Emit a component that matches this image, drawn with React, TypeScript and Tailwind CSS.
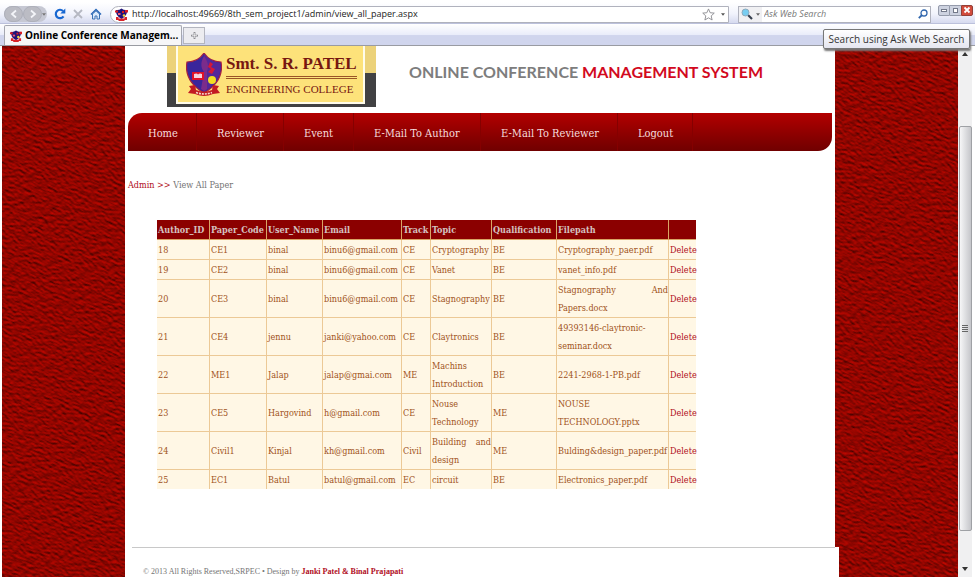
import React from "react";

const NAV = [
  { label: "Home", width: "w-[69px]" },
  { label: "Reviewer", width: "w-[87px]" },
  { label: "Event", width: "w-[70px]" },
  { label: "E-Mail To Author", width: "w-[127px]" },
  { label: "E-Mail To Reviewer", width: "w-[137px]" },
  { label: "Logout", width: "w-[75px]" },
];

const COLUMNS = [
  { name: "Author_ID", width: "w-[53px]" },
  { name: "Paper_Code", width: "w-[57px]" },
  { name: "User_Name", width: "w-[56px]" },
  { name: "Email", width: "w-[79px]" },
  { name: "Track", width: "w-[29px]" },
  { name: "Topic", width: "w-[61px]" },
  { name: "Qualification", width: "w-[65px]" },
  { name: "Filepath", width: "w-[112px]" },
];

const PAPERS = [
  ["18", "CE1", "binal", "binu6@gmail.com", "CE", "Cryptography", "BE", "Cryptography_paer.pdf"],
  ["19", "CE2", "binal", "binu6@gmail.com", "CE", "Vanet", "BE", "vanet_info.pdf"],
  ["20", "CE3", "binal", "binu6@gmail.com", "CE", "Stagnography", "BE", "Stagnography And Papers.docx"],
  ["21", "CE4", "jennu", "janki@yahoo.com", "CE", "Claytronics", "BE", "49393146-claytronic-seminar.docx"],
  ["22", "ME1", "Jalap", "jalap@gmai.com", "ME", "Machins Introduction", "BE", "2241-2968-1-PB.pdf"],
  ["23", "CE5", "Hargovind", "h@gmail.com", "CE", "Nouse Technology", "ME", "NOUSE TECHNOLOGY.pptx"],
  ["24", "Civil1", "Kinjal", "kh@gmail.com", "Civil", "Building and design", "ME", "Bulding&design_paper.pdf"],
  ["25", "EC1", "Batul", "batul@gmail.com", "EC", "circuit", "BE", "Electronics_paper.pdf"],
];

function Crest({ className }: { className: string }) {
  return (
    <svg viewBox="0 0 36 44" className={className} aria-hidden="true">
      <path d="M18 0 C14 6 8 9 1 9 C-1 20 3 31 18 40 C33 31 37 20 35 9 C28 9 22 6 18 0Z" fill="#3a259b" stroke="#a8203f" strokeWidth="1.2" />
      <path d="M18 1 C22 6 28 9 34 10 C36 20 32 30 18 39Z" fill="#542799" />
      <path d="M18 3 C14 10 15 15 18 19 L15 36 L18 38 L21 36 L21 18 C23 13 22 9 18 3Z" fill="#7b2c8b" />
      <path d="m24 9 3 2-2 3 4 2-3 5-4-2 3-3-3-2Z" fill="#d51836" />
      <path d="M6 19h12v8H6Z" fill="#e01228" />
      <path d="M8 21q3-1 4 .5 1.500-1.500 4-.5v4H8Z" fill="#f5d4df" />
      <circle cx="26" cy="27" r="4" fill="#f3df22" />
      <path d="M3 33 9 32l1 5q8 3 16 0l1-5 6 1-2 3 3 4-7 1q-9 4-18 0l-7-1 3-4Z" fill="#c21c22" />
      <path d="M10 39.500q8 3 16 0" stroke="#f5d7cf" strokeWidth="1.600" strokeDasharray="2 1" fill="none" />
    </svg>
  );
}

function Favicon({ className }: { className: string }) {
  return (
    <svg viewBox="0 0 13 13" className={className} aria-hidden="true">
      <path d="M1 2Q4 2.500 6.500 .5 9 2.500 12 2 12.500 8 6.500 11 .5 8 1 2Z" fill="#20147a" />
      <path d="M0 2.500h3v2H0ZM10 2h3v2.500h-3ZM7 3h2v2H7Z" fill="#d91d24" />
      <path d="M3 5h2.500v2H3Z" fill="#ed5a72" />
      <circle cx="9" cy="7.500" r="1.300" fill="#f0d43a" />
      <path d="M1 9h2.500v1.500h6V9H12v3H9.500v1h-6v-1H1Z" fill="#d8242a" />
    </svg>
  );
}

function LeatherTexture() {
  return (
    <svg className="absolute inset-0 h-full w-full" aria-hidden="true">
      <defs>
        <filter id="leather" x="0" y="0" width="100%" height="100%" colorInterpolationFilters="sRGB">
          <feTurbulence type="fractalNoise" baseFrequency="0.2 0.42" numOctaves="3" seed="4" result="grain" />
          <feDiffuseLighting in="grain" surfaceScale="1.1" diffuseConstant="1" lightingColor="#ce0800">
            <feDistantLight azimuth="250" elevation="45" />
          </feDiffuseLighting>
        </filter>
      </defs>
      <rect width="100%" height="100%" fill="#8b0000" />
      <g transform="rotate(26)">
        <rect x="-100" y="-700" width="1500" height="1500" filter="url(#leather)" />
      </g>
    </svg>
  );
}

function ToolbarIcons() {
  return (
    <div className="flex items-center">
      <div className="flex h-4 w-[43px] items-center rounded-lg bg-[#c6c8d3]">
        <button aria-label="Back" className="flex h-4 w-[19px] items-center justify-center rounded-lg border border-[#aeb0ba] bg-[#bbbcc4]">
          <svg viewBox="0 0 10 10" className="h-2.5 w-2.5"><path d="M7 1.500 3 5l4 3.500" stroke="#f4f5f9" strokeWidth="1.800" fill="none" /></svg>
        </button>
        <button aria-label="Forward" className="flex h-4 w-[19px] items-center justify-center rounded-lg border border-[#aeb0ba] bg-[#bbbcc4]">
          <svg viewBox="0 0 10 10" className="h-2.5 w-2.5"><path d="M3 1.500 7 5 3 8.500" stroke="#f4f5f9" strokeWidth="1.800" fill="none" /></svg>
        </button>
        <svg viewBox="0 0 6 4" className="h-[3px] w-1"><path d="M0 0h6L3 4Z" fill="#777" /></svg>
      </div>
      <button aria-label="Reload" className="ml-1 flex w-[18px] justify-center">
        <svg viewBox="0 0 12 12" className="h-3 w-3"><path d="M9.500 8.300A4.200 4.200 0 1 1 9 3" stroke="#1767d1" strokeWidth="2.200" fill="none" /><path d="M11.300 .5v5H6.300Z" fill="#1767d1" /></svg>
      </button>
      <button aria-label="Stop" className="flex w-[18px] justify-center">
        <svg viewBox="0 0 12 12" className="h-3 w-3"><path d="m2 2 8 8M10 2l-8 8" stroke="#b5b8c2" strokeWidth="1.800" fill="none" /></svg>
      </button>
      <button aria-label="Home page" className="flex w-[18px] justify-center">
        <svg viewBox="0 0 12 12" className="h-3 w-3"><path d="M1 6.500 6 1.500l5 5" stroke="#2a68b8" strokeWidth="1.500" fill="none" /><path d="M2.500 6v5h2.500V8h2v3h2.500V6L6 2.800Z" fill="#dbeafb" stroke="#3972b5" /></svg>
      </button>
    </div>
  );
}

function BrowserChrome() {
  return (
    <div className="shrink-0 font-['Open_Sans',sans-serif]">
      <div className="flex h-6 items-center gap-[9px] border-b border-[#bcc1dc] bg-linear-to-b from-white from-10% via-[#f1f3fc] via-60% to-[#d6daef] pt-[5px] pr-0.5 pl-1">
        <ToolbarIcons />
        <div className="-ml-1 flex h-[17px] min-w-0 flex-1 items-center rounded-l-full border border-[#b0b2bd] bg-white pr-[3px] pl-1">
          <Favicon className="h-[13px] w-[13px] shrink-0" />
          <input aria-label="Address" defaultValue="http://localhost:49669/8th_sem_project1/admin/view_all_paper.aspx" className="ml-1 min-w-0 flex-1 text-[9px] leading-[14px] text-[#222] outline-none" />
          <svg viewBox="0 0 14 14" className="h-[13px] w-[13px]"><path d="m7 1 1.800 4.100 4.400.4-3.300 3 1 4.400L7 10.600 3.100 12.900l1-4.400-3.300-3 4.400-.4Z" fill="#fff" stroke="#8d8d92" /></svg>
          <svg viewBox="0 0 6 4" className="ml-1.5 h-[3px] w-1"><path d="M0 0h6L3 4Z" fill="#555" /></svg>
        </div>
        <div className="flex h-[17px] w-[193px] items-center border border-[#b0b2bd] bg-white pr-0.5">
          <div className="flex h-full w-[23px] items-center gap-[3px] bg-[#f0f0f3] pl-0.5">
            <svg viewBox="0 0 12 12" className="h-3 w-3"><path d="m7 7 4 4" stroke="#343d4c" strokeWidth="2.200" /><circle cx="4.500" cy="4.500" r="3.500" fill="#78cdf1" stroke="#8fa9bb" /></svg>
            <svg viewBox="0 0 6 4" className="h-[3px] w-1"><path d="M0 0h6L3 4Z" fill="#666" /></svg>
          </div>
          <input aria-label="Search" placeholder="Ask Web Search" className="ml-0.5 min-w-0 flex-1 text-[9px] leading-[14px] italic outline-none placeholder:text-[#777]" />
          <svg viewBox="0 0 10 10" className="h-2.5 w-2.5"><path d="M4.500 5.500.8 9.200" stroke="#3066ad" strokeWidth="1.800" /><circle cx="6" cy="4" r="3" fill="#fff" stroke="#3066ad" strokeWidth="1.300" /></svg>
        </div>
        <div className="-ml-0.5 mb-2 flex h-[11px]">
          <button aria-label="Minimise" className="flex w-3 items-center justify-center rounded-l-xs border border-[#959bab] bg-[#cdd2e0]"><span className="h-[3px] w-1.5 border border-[#73798a] bg-white" /></button>
          <button aria-label="Restore" className="flex w-[11px] items-center justify-center border-y border-[#959bab] bg-[#cdd2e0]"><span className="h-[5px] w-[5px] border border-[#73798a] bg-white" /></button>
          <button aria-label="Close" className="flex w-3 items-center justify-center rounded-r-xs border border-[#934037] bg-[#d24b3c]">
            <svg viewBox="0 0 8 8" className="h-2 w-2"><path d="m1.500 1.500 5 5m0-5-5 5" stroke="#fff" strokeWidth="1.800" /></svg>
          </button>
        </div>
      </div>
      <div className="flex h-[22px] items-end gap-px border-b border-[#999ba2] bg-linear-to-b from-white from-0% via-[#eaedfa] via-50% to-[#d0d5ed] to-55% pl-1">
        <button className="flex h-5 w-[178px] items-center gap-[3px] rounded-t-xs border border-b-0 border-[#a5a7b0] bg-[#f6f6f8] pl-[5px] text-[10px] font-bold text-black">
          <Favicon className="h-3 w-3 shrink-0" />
          <span className="whitespace-nowrap">Online Conference Managem...</span>
        </button>
        <button aria-label="New tab" className="mb-px flex h-[17px] w-[22px] items-center justify-center border border-[#b3b5bf] bg-[#ececf0]">
          <svg viewBox="0 0 8 8" className="h-[7px] w-[7px]"><path d="M4 0v8M0 4h8" stroke="#84858b" strokeWidth="2" /><path d="M4 1v6M1 4h6" stroke="#fff" strokeWidth=".7" /></svg>
        </button>
      </div>
    </div>
  );
}

function CollegeLogo() {
  return (
    <div className="flex h-[61px] w-[209px] bg-linear-to-b from-[#ecd27a] from-45% to-[#414143] to-45% pr-[11px] pb-[3px] pl-[9px]">
      <div className="flex flex-1 items-start border-x-2 border-b-2 border-[#fffceb] bg-[#fde27a] pl-2 font-['Liberation_Serif',serif] whitespace-nowrap text-[#771711]">
        <Crest className="mt-[7px] h-[44px] w-[36px] shrink-0" />
        <div className="ml-1 pt-1.5">
          <div className="text-[17px] leading-[24px] font-bold">Smt. S. R. PATEL</div>
          <div className="h-[3px] border-y border-[#9a5526]" />
          <div className="text-[11px] leading-[20px]">ENGINEERING COLLEGE</div>
        </div>
      </div>
    </div>
  );
}

function PaperTable() {
  return (
    <table className="mt-[26px] ml-[29px] w-[539px] table-fixed border-separate border-spacing-0 bg-[#fff7e5] text-[9px] leading-[18px] text-[#a0521a]">
      <thead>
        <tr className="bg-[#8b0000] text-left text-[#d5c2c0]">
          {COLUMNS.map((c) => (
            <th key={c.name} scope="col" className={"border-r border-b border-[#d9a566] pt-px pl-px font-bold whitespace-nowrap " + c.width}>{c.name}</th>
          ))}
          <td className="border-b border-[#d9a566]" />
        </tr>
      </thead>
      <tbody>
        {PAPERS.map((row, r) => (
          <tr key={row[0]}>
            {row.map((cell, i) => (
              <td key={i} className={"border-r border-[#ecc996] pt-px pl-px text-justify " + (i === 5 || i === 7 ? "" : "whitespace-nowrap ") + (r < PAPERS.length - 1 ? "border-b" : "")}>{cell}</td>
            ))}
            <td className={"border-[#ecc996] pt-px pl-px " + (r < PAPERS.length - 1 ? "border-b" : "")}>
              <a href="#delete" className="text-[#b00d1c]">Delete</a>
            </td>
          </tr>
        ))}
      </tbody>
    </table>
  );
}

function Scrollbar() {
  return (
    <div className="flex w-[14px] shrink-0 flex-col items-center bg-[#f0f0f1] py-1.5" aria-hidden="true">
      <svg viewBox="0 0 6 4" className="h-1 w-1.5"><path d="M0 4h6L3 0Z" fill="#333" /></svg>
      <div className="mt-[70px] flex w-[13px] flex-1 flex-col items-center justify-center gap-px rounded-xs border border-[#9fa1a5] bg-linear-to-r from-[#f6f6f7] to-[#c5c6ca]">
        <span className="h-px w-1.5 bg-[#666]" />
        <span className="h-px w-1.5 bg-[#666]" />
        <span className="h-px w-1.5 bg-[#666]" />
        <span className="h-px w-1.5 bg-[#666]" />
      </div>
      <svg viewBox="0 0 6 4" className="mt-[36px] h-1 w-1.5"><path d="M0 0h6L3 4Z" fill="#333" /></svg>
    </div>
  );
}

export default function App() {
  return (
    <div className="relative flex h-screen flex-col overflow-hidden bg-white font-['DejaVu_Serif_Condensed','DejaVu_Serif',serif]">
      <BrowserChrome />
      <div role="tooltip" className="absolute top-[29px] right-[5px] z-10 flex h-[20px] w-[147px] items-center justify-center rounded-xs border border-[#777] bg-linear-to-b from-white to-[#e5e6f0] font-['Open_Sans',sans-serif] text-[10px] whitespace-nowrap text-[#333] shadow-[1px_2px_2px_#777]">
        Search using Ask Web Search
      </div>
      <div className="flex min-h-0 flex-1 pr-[3px] pb-px pl-0.5">
        <div className="relative min-w-0 flex-1 overflow-hidden">
          <LeatherTexture />
          <div className="relative mx-auto flex h-full w-[710px] flex-col">
            <main className="flex-1 bg-white px-[3px]">
              <header className="flex h-[67px] items-start pl-[39px]">
                <CollegeLogo />
                <h1 className="ml-[33px] pt-[14px] font-['Lato',sans-serif] text-[16px] leading-6 font-bold whitespace-nowrap text-[#7d7d7d]">
                  ONLINE CONFERENCE <span className="text-[#d2091e]">MANAGEMENT SYSTEM</span>
                </h1>
              </header>
              <nav className="flex h-[38px] overflow-hidden rounded-tl-[14px] rounded-br-[14px] bg-linear-to-b from-[#b30000] to-[#700000] text-[11px] text-[#f6dddd]">
                {NAV.map((item) => (
                  <a key={item.label} href="#nav" className={"flex items-center border-r border-[#850000] pt-1 pl-5 whitespace-nowrap " + item.width}>{item.label}</a>
                ))}
              </nav>
              <div className="mt-[25px] text-[9px] leading-[18px] text-[#747474]">
                <a href="#admin" className="text-[#b00d1c]">Admin &gt;&gt;</a> View All Paper
              </div>
              <PaperTable />
            </main>
            <footer className="-mr-1 h-[30px] shrink-0 bg-white pl-[7px] font-['Liberation_Serif',serif] text-[8px] leading-[12px] text-[#747474]">
              <div className="mr-1 border-t border-[#c8c8c8] pt-[18px] pl-[11px]">
                © 2013 All Rights Reserved,SRPEC • Design by <a href="#authors" className="font-bold text-[#b00d1c]">Janki Patel &amp; Binal Prajapati</a>
              </div>
            </footer>
          </div>
        </div>
        <Scrollbar />
      </div>
    </div>
  );
}
